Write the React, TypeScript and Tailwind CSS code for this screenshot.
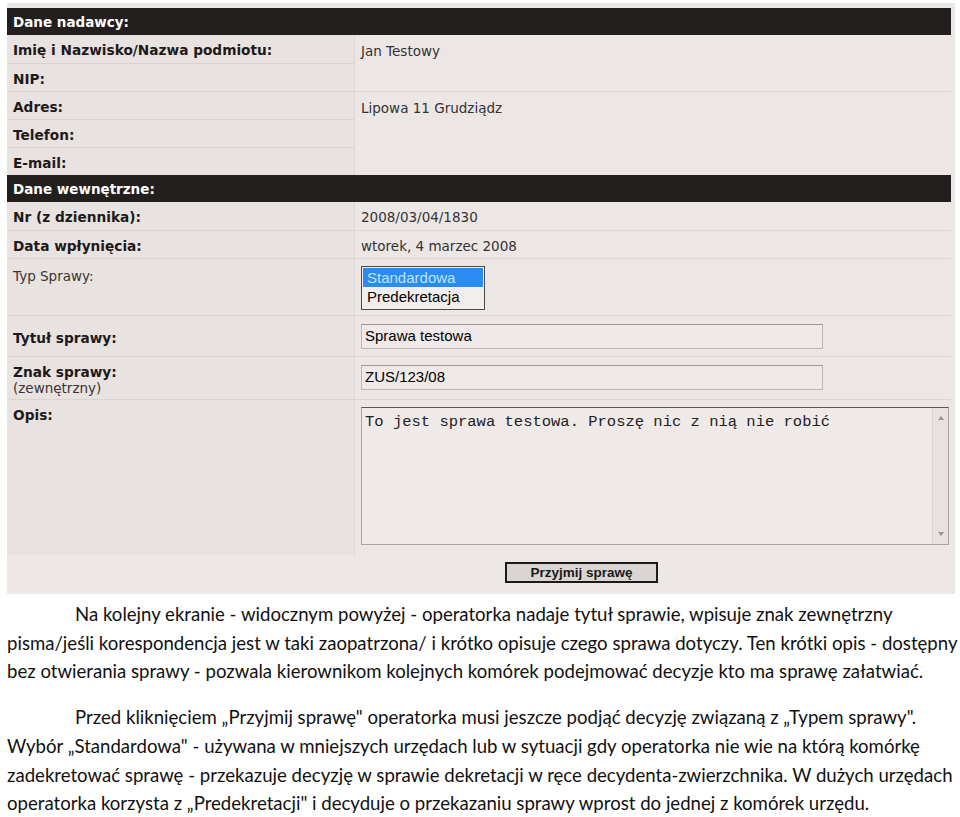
import { ReactNode } from "react";

const form = "font-['DejaVu_Sans',Verdana,sans-serif]";

function SectionBar({ title }: { title: string }) {
  return (
    <div className="h-[27px] bg-[#231f1e] flex items-center pl-[6px] pt-[1px] text-white text-[13.5px] font-bold">
      {title}
    </div>
  );
}

function Label({ children, bold = true }: { children: ReactNode; bold?: boolean }) {
  return (
    <span className={bold ? "text-[13.7px] font-bold text-[#1e1a19]" : "text-[13.5px] text-[#3a3534]"}>
      {children}
    </span>
  );
}

function Row({ h, left, right }: { h: string; left: ReactNode; right?: ReactNode }) {
  return (
    <div className={`grid grid-cols-[347px_1fr] ${h}`}>
      <div className="bg-[#e8e2e1] border-b border-[#d9d3d2] pl-[6px] pt-[3px] flex items-center">{left}</div>
      <div className="bg-[#ece6e5] border-b border-l border-[#dcd6d5] pl-[6px] pt-[3px] flex items-center">{right}</div>
    </div>
  );
}

const value = "text-[13.5px] text-[#333]";

const lines1 = [
  "pisma/jeśli korespondencja jest w taki zaopatrzona/ i krótko opisuje czego sprawa dotyczy. Ten krótki opis - dostępny",
  "bez otwierania sprawy - pozwala kierownikom kolejnych komórek podejmować decyzje kto ma sprawę załatwiać.",
];

const lines2 = [
  "Wybór „Standardowa\" - używana w mniejszych urzędach lub w sytuacji gdy operatorka nie wie na którą komórkę",
  "zadekretować sprawę - przekazuje decyzję w sprawie dekretacji w ręce decydenta-zwierzchnika. W dużych urzędach",
  "operatorka korzysta z „Predekretacji\" i decyduje o przekazaniu sprawy wprost do jednej z komórek urzędu.",
];

export default function App() {
  return (
    <div className="w-[960px] h-[817px] bg-white overflow-hidden">
      {/* screenshot of the form */}
      <div className={`ml-[7px] mt-[3px] w-[948px] bg-[#e9e8e6] pt-[5px] pr-[4px] ${form}`}>
        <SectionBar title="Dane nadawcy:" />

        <div className="grid grid-cols-[347px_1fr] grid-rows-[29px_28px_28px_28px_27px]">
          <div className="bg-[#e8e2e1] border-b border-[#d9d3d2] pl-[6px] pt-[3px] flex items-center">
            <Label>Imię i Nazwisko/Nazwa podmiotu:</Label>
          </div>
          <div className={`row-span-2 bg-[#ece6e5] border-b border-l border-[#dcd6d5] pl-[6px] pt-[6px] ${value}`}>
            Jan Testowy
          </div>
          <div className="bg-[#e8e2e1] border-b border-[#d9d3d2] pl-[6px] pt-[3px] flex items-center">
            <Label>NIP:</Label>
          </div>
          <div className="bg-[#e8e2e1] border-b border-[#d9d3d2] pl-[6px] pt-[3px] flex items-center">
            <Label>Adres:</Label>
          </div>
          <div className={`row-span-3 bg-[#ece6e5] border-l border-[#dcd6d5] pl-[6px] pt-[6px] ${value}`}>
            Lipowa 11 Grudziądz
          </div>
          <div className="bg-[#e8e2e1] border-b border-[#d9d3d2] pl-[6px] pt-[3px] flex items-center">
            <Label>Telefon:</Label>
          </div>
          <div className="bg-[#e8e2e1] pl-[6px] pt-[3px] flex items-center">
            <Label>E-mail:</Label>
          </div>
        </div>

        <SectionBar title="Dane wewnętrzne:" />

        <Row h="h-[29px]" left={<Label>Nr (z dziennika):</Label>} right={<span className={value}>2008/03/04/1830</span>} />
        <Row
          h="h-[28px]"
          left={<Label>Data wpłynięcia:</Label>}
          right={<span className={value}>wtorek, 4 marzec 2008</span>}
        />
        <div className="grid grid-cols-[347px_1fr] h-[57px]">
          <div className="bg-[#e8e2e1] border-b border-[#d9d3d2] pl-[6px] pt-[5px]">
            <Label bold={false}>Typ Sprawy:</Label>
          </div>
          <div className="bg-[#ece6e5] border-b border-l border-[#dcd6d5] pl-[6px] pt-[7px]">
            <div className="w-[124px] h-[44px] border border-[#4a4a4a] bg-[#f2eeed] p-[1px] font-['Liberation_Sans',Arial,sans-serif] text-[15px] leading-[19px]">
              <div className="bg-[#2a8cf0] text-[#bfe3ff] pl-[4px]">Standardowa</div>
              <div className="text-black pl-[4px]">Predekretacja</div>
            </div>
          </div>
        </div>
        <div className="grid grid-cols-[347px_1fr] h-[41px]">
          <div className="bg-[#e8e2e1] border-b border-[#d9d3d2] pl-[6px] pt-[4px] flex items-center">
            <Label>Tytuł sprawy:</Label>
          </div>
          <div className="bg-[#ece6e5] border-b border-l border-[#dcd6d5] pl-[6px] flex items-center">
            <div className="w-[462px] h-[25px] border border-[#bcb6b5] border-t-[#9d9796] bg-[#efeae9] pl-[3px] flex items-center font-['Liberation_Sans',Arial,sans-serif] text-[15px] text-black">
              Sprawa testowa
            </div>
          </div>
        </div>
        <div className="grid grid-cols-[347px_1fr] h-[43px]">
          <div className="bg-[#e8e2e1] border-b border-[#d9d3d2] pl-[6px] pt-[7px] flex flex-col leading-[16px]">
            <Label>Znak sprawy:</Label>
            <Label bold={false}>(zewnętrzny)</Label>
          </div>
          <div className="bg-[#ece6e5] border-b border-l border-[#dcd6d5] pl-[6px] pt-[8px]">
            <div className="w-[462px] h-[25px] border border-[#bcb6b5] border-t-[#9d9796] bg-[#efeae9] pl-[3px] flex items-center font-['Liberation_Sans',Arial,sans-serif] text-[15px] text-black">
              ZUS/123/08
            </div>
          </div>
        </div>
        <div className="grid grid-cols-[347px_1fr] h-[155px]">
          <div className="bg-[#e8e2e1] pl-[6px] pt-[3px]">
            <Label>Opis:</Label>
          </div>
          <div className="bg-[#ece6e5] border-l border-[#dcd6d5] pl-[6px] pt-[7px]">
            <div className="w-[588px] h-[138px] border border-[#a9a3a2] border-t-[#5a5554] bg-[#efe9e8] flex">
              <div className="flex-1 pl-[3px] pt-[5px] font-['Liberation_Mono','Courier_New',monospace] text-[15.5px] leading-[18px] text-[#222]">
                To jest sprawa testowa. Proszę nic z nią nie robić
              </div>
              <div className="w-[16px] border-l border-[#dcd7d6] bg-[#e7e2e1] flex flex-col items-center justify-between py-[8px]">
                <svg width="6" height="4" viewBox="0 0 6 4">
                  <path d="M0 4 L3 0 L6 4 Z" fill="#9a9594" />
                </svg>
                <svg width="6" height="4" viewBox="0 0 6 4">
                  <path d="M0 0 L3 4 L6 0 Z" fill="#9a9594" />
                </svg>
              </div>
            </div>
          </div>
        </div>
        <div className="h-[39px] bg-[#ede7e6] pl-[498px] pt-[5px]">
          <button className="w-[153px] h-[21px] border-2 border-[#1c1a1a] bg-[#dad4d3] font-['Liberation_Sans',Arial,sans-serif] text-[13.5px] font-bold text-[#1a1a1a] leading-none">
            Przyjmij sprawę
          </button>
        </div>
      </div>

      {/* description */}
      <div className="mt-[6px] pl-[7px] font-['Lato','Open_Sans',sans-serif] text-[18.6px] leading-[28.7px] text-[#111] whitespace-nowrap">
        <div className="pl-[68px]">
          Na kolejny ekranie - widocznym powyżej - operatorka nadaje tytuł sprawie, wpisuje znak zewnętrzny
        </div>
        {lines1.map(l => (
          <div key={l}>{l}</div>
        ))}
        <div className="pl-[68px] mt-[17px]">
          Przed kliknięciem „Przyjmij sprawę" operatorka musi jeszcze podjąć decyzję związaną z „Typem sprawy".
        </div>
        {lines2.map(l => (
          <div key={l}>{l}</div>
        ))}
      </div>
    </div>
  );
}
